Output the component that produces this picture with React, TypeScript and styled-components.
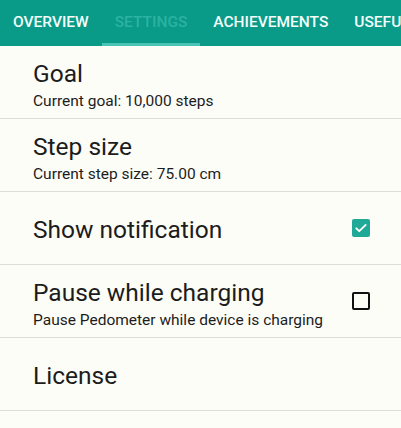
import React from "react";
import styled, { createGlobalStyle } from "styled-components";

const GlobalStyle = createGlobalStyle`
  html, body {
    margin: 0;
    padding: 0;
    background: #fdfdf8;
    font-family: Roboto, "Liberation Sans", sans-serif;
    overflow: hidden;
  }
`;

interface Setting {
  title: string;
  summary?: string;
  checkbox?: boolean;
  checked?: boolean;
}

const settings: Setting[] = [
  { title: "Goal", summary: "Current goal: 10,000 steps" },
  { title: "Step size", summary: "Current step size: 75.00 cm" },
  { title: "Show notification", checkbox: true, checked: true },
  {
    title: "Pause while charging",
    summary: "Pause Pedometer while device is charging",
    checkbox: true,
    checked: false,
  },
  { title: "License" },
];

const tabs = ["OVERVIEW", "SETTINGS", "ACHIEVEMENTS", "USEFUL"];

const App = () => {
  return (
    <Page>
      <GlobalStyle />
      <TabBar>
        {tabs.map((tab) => (
          <Tab key={tab} $active={tab === "SETTINGS"}>
            {tab}
          </Tab>
        ))}
      </TabBar>
      <List>
        {settings.map((s) => (
          <Row key={s.title}>
            <TextBox $withSummary={!!s.summary}>
              <Title>{s.title}</Title>
              {s.summary && <Summary>{s.summary}</Summary>}
            </TextBox>
            {s.checkbox && (
              <CheckBox $checked={!!s.checked}>
                {s.checked && (
                  <svg width="14" height="14" viewBox="0 0 24 24">
                    <path
                      d="M4 12.5l5 5L20 6.5"
                      fill="none"
                      stroke="#fff"
                      strokeWidth="3.2"
                      strokeLinecap="round"
                      strokeLinejoin="round"
                    />
                  </svg>
                )}
              </CheckBox>
            )}
          </Row>
        ))}
      </List>
    </Page>
  );
};

export default App;

const Page = styled.div`
  width: 401px;
  height: 428px;
  background: #fdfdf8;
`;

const TabBar = styled.div`
  display: flex;
  height: 46px;
  background: #0a9a88;
  white-space: nowrap;
  overflow: hidden;
`;

const Tab = styled.div<{ $active: boolean }>`
  display: flex;
  align-items: center;
  padding: 0 13px 2px;
  flex-shrink: 0;
  font-size: 15.5px;
  font-weight: 500;
  color: ${({ $active }) => ($active ? "#2bb2a2" : "#f4fffc")};
  box-shadow: ${({ $active }) =>
    $active ? "inset 0 -3px 0 #49c3b3" : "none"};
`;

const List = styled.div`
  display: flex;
  flex-direction: column;
`;

const Row = styled.div`
  display: flex;
  align-items: center;
  justify-content: space-between;
  height: 72px;
  padding: 0 31px 0 33px;
  border-bottom: 1px solid #dcdcd8;
`;

const TextBox = styled.div<{ $withSummary: boolean }>`
  display: flex;
  flex-direction: column;
  padding-top: ${({ $withSummary }) => ($withSummary ? "6px" : "3px")};
`;

const Title = styled.div`
  font-size: 24.5px;
  line-height: 28px;
  color: #1c1c1c;
`;

const Summary = styled.div`
  margin-top: 3px;
  font-size: 15.5px;
  line-height: 20px;
  color: #1c1c1c;
`;

const CheckBox = styled.div<{ $checked: boolean }>`
  display: flex;
  align-items: center;
  justify-content: center;
  box-sizing: border-box;
  width: 18px;
  height: 18px;
  border-radius: 2px;
  background: ${({ $checked }) => ($checked ? "#1fa996" : "transparent")};
  border: ${({ $checked }) => ($checked ? "none" : "2px solid #111")};
`;
